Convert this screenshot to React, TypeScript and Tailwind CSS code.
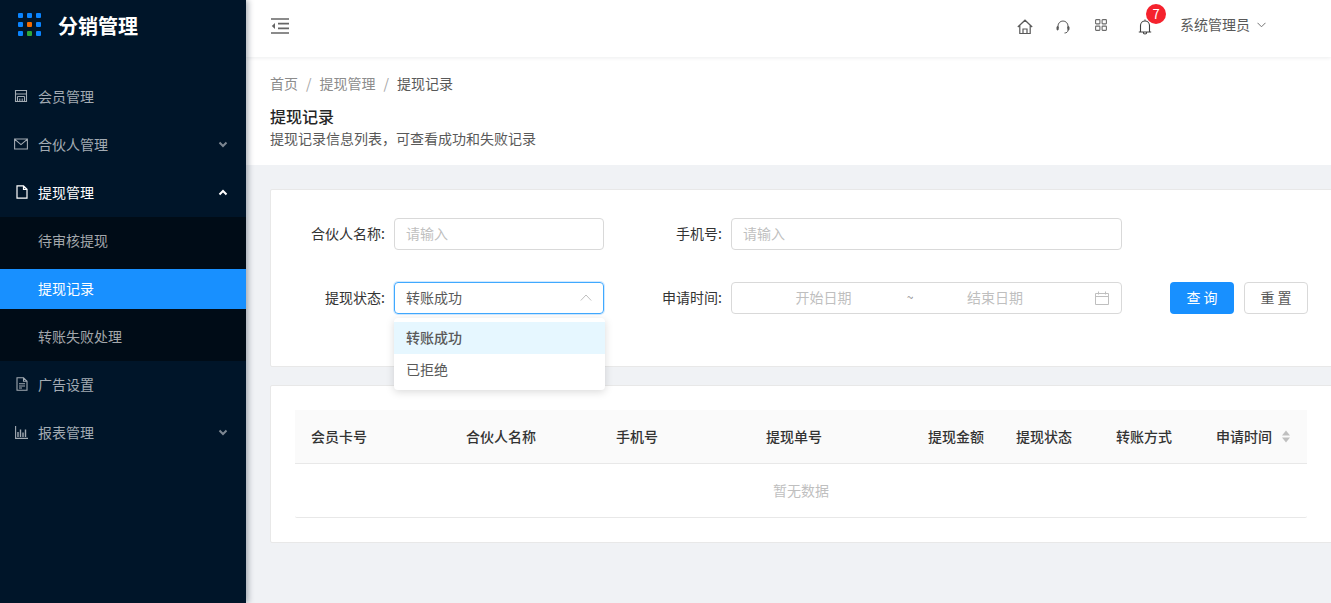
import React from 'react';

const Dots = () => {
  const colors = ['#0a84ff', '#0a84ff', '#0a84ff', '#0a84ff', '#f56a00', '#0a84ff', '#0a84ff', '#2ea83a', '#0a84ff'];
  return (
    <div className="grid grid-cols-[5px_5px_5px] grid-rows-[5px_5px_5px] gap-[4px]">
      {colors.map((c, i) => (
        <span key={i} className="rounded-[1px]" style={{ backgroundColor: c }} />
      ))}
    </div>
  );
};

const Chevron = ({ up = false, className = '' }: { up?: boolean; className?: string }) => (
  <svg width="10" height="7" viewBox="0 0 10 7" fill="none" stroke="currentColor" strokeWidth="2" className={className}>
    <path d={up ? 'M1.5 5.5 5 2l3.5 3.5' : 'M1.5 1.5 5 5l3.5-3.5'} />
  </svg>
);

const StoreIcon = () => (
  <svg width="14" height="14" viewBox="0 0 14 14" fill="none" stroke="currentColor" strokeWidth="1.1">
    <path d="M1.5 1.5h11v11h-11zM1.5 5h11M3.5 7.5h7M3.5 7.5v5M10.5 7.5v5M5.8 9.5v3M8.2 9.5v3" />
  </svg>
);
const MailIcon = () => (
  <svg width="14" height="12" viewBox="0 0 14 12" fill="none" stroke="currentColor" strokeWidth="1.1">
    <path d="M.6 1h12.8v10H.6zM.8 1.3 7 6.6l6.2-5.3" />
  </svg>
);
const PageIcon = () => (
  <svg width="12" height="14" viewBox="0 0 12 14" fill="none" stroke="currentColor" strokeWidth="1.2" className="ml-[2px]">
    <path d="M1 .8h6.500L11 4.300v8.900H1zM7.500.8v3.500H11" />
  </svg>
);
const AdIcon = () => (
  <svg width="12" height="14" viewBox="0 0 12 14" fill="none" stroke="currentColor" strokeWidth="1.1" className="ml-[2px]">
    <path d="M1 .8h6.500L11 4.300v8.900H1zM7.500.8v3.500H11M3 6.800h6M3 9h6M3 11h3" />
  </svg>
);
const ChartIcon = () => (
  <svg width="13" height="13" viewBox="0 0 13 13" fill="none" stroke="currentColor" strokeWidth="1.1" className="ml-[1px]">
    <path d="M.6 0v12.400H13" />
    <path d="M3 11V6M5.500 11V3.500M8 11V6.500M10.500 11V3.500" strokeWidth="1.4" />
  </svg>
);

const MenuItem = ({ icon, label, arrow, active = false }: { icon: React.ReactNode; label: string; arrow?: 'up' | 'down'; active?: boolean }) => (
  <div className={`flex h-12 items-center pb-[2px] pl-[14px] pr-[18px] text-sm ${active ? 'text-white' : 'text-[#a3abb3]'}`}>
    <span className="flex w-[24px] items-center">{icon}</span>
    <span className="flex-1">{label}</span>
    {arrow && <Chevron up={arrow === 'up'} className={active ? 'text-white' : 'text-[#7d8792]'} />}
  </div>
);

const SubItem = ({ label, active = false }: { label: string; active?: boolean }) => (
  <div className="py-1">
    <div className={`flex h-10 items-center pb-[2px] pl-[38px] text-sm ${active ? 'bg-[#1890ff] text-white' : 'text-[#a3a7ab]'}`}>{label}</div>
  </div>
);

const Sidebar = () => (
  <aside className="relative z-20 flex w-[246px] shrink-0 flex-col bg-[#001529] shadow-[2px_0_6px_rgba(0,21,41,0.35)]">
    <div className="flex h-[73px] items-start pl-[18px] pt-[13px]">
      <Dots />
      <span className="ml-[17px] text-[20px] font-bold leading-[26px] text-white">分销管理</span>
    </div>
    <MenuItem icon={<StoreIcon />} label="会员管理" />
    <MenuItem icon={<MailIcon />} label="合伙人管理" arrow="down" />
    <MenuItem icon={<PageIcon />} label="提现管理" arrow="up" active />
    <div className="bg-[#000c17]">
      <SubItem label="待审核提现" />
      <SubItem label="提现记录" active />
      <SubItem label="转账失败处理" />
    </div>
    <MenuItem icon={<AdIcon />} label="广告设置" />
    <MenuItem icon={<ChartIcon />} label="报表管理" arrow="down" />
  </aside>
);

const TopBar = () => (
  <header className="relative z-10 flex h-[57px] shrink-0 items-center bg-white pb-[8px] pl-[25px] pr-[65px] shadow-[0_1px_4px_rgba(0,21,41,0.08)]">
    <svg width="18" height="16" viewBox="0 0 18 16" fill="none" className="mt-[3px] text-[#666]" stroke="currentColor" strokeWidth="1.6">
      <path d="M0 1h18M7 5.600h11M7 10.400h11M0 15h18" />
      <path d="M4 5 0.800 8 4 11z" fill="currentColor" stroke="none" />
    </svg>
    <div className="flex-1" />
    <svg width="16" height="16" viewBox="0 0 16 16" fill="none" stroke="#595959" strokeWidth="1.2" className="mt-[5px]">
      <path d="M.8 8 8 1.200 15.200 8M2.800 6.400V14.500h10.400V6.400M6 14.500v-4.500h4v4.500" />
    </svg>
    <svg width="14" height="15" viewBox="0 0 14 15" fill="none" stroke="#595959" strokeWidth="1" className="ml-[23px] mt-[5px]">
      <path d="M2 8V6a5 5 0 0 1 10 0v2M12 10c0 2-1.500 3-3.500 3" />
      <rect x="1" y="6.500" width="1.200" height="3.500" rx=".6" fill="#595959" />
      <rect x="11.800" y="6.500" width="1.200" height="3.500" rx=".6" fill="#595959" />
    </svg>
    <svg width="12" height="12" viewBox="0 0 12 12" fill="none" stroke="#6b6b6b" strokeWidth="1.1" className="ml-[25px] mt-[1px]">
      <rect x=".6" y=".6" width="4.300" height="4.300" rx=".6" />
      <rect x="7.100" y=".6" width="4.300" height="4.300" rx=".6" />
      <rect x=".6" y="7.100" width="4.300" height="4.300" rx=".6" />
      <rect x="7.100" y="7.100" width="4.300" height="4.300" rx=".6" />
    </svg>
    <div className="relative ml-[31px] mt-[4px]">
      <svg width="14" height="16" viewBox="0 0 14 16" fill="none" stroke="#404040" strokeWidth="1.1" className="block">
        <path d="M7 .5v1.400M2.500 13V6.500a4.500 4.500 0 0 1 9 0V13M.8 13h12.400M5.300 13.200c0 2.400 3.400 2.400 3.400 0" />
      </svg>
      <span className="absolute left-[8px] top-[-15px] flex h-5 w-5 items-center justify-center rounded-full bg-[#f5222d] text-[13px] text-white">7</span>
    </div>
    <span className="ml-[28px] pb-[2px] text-sm text-[#595959]">系统管理员</span>
    <svg width="9" height="6" viewBox="0 0 9 6" fill="none" stroke="#737373" className="ml-[7px]">
      <path d="M.5.8 4.500 4.800 8.500.8" />
    </svg>
  </header>
);

const PageHead = () => (
  <section className="flex h-[108px] shrink-0 flex-col bg-white pl-[24px] pt-[15px]">
    <div className="flex h-[22px] items-center text-sm text-[#8c8c8c]">
      <span>首页</span>
      <span className="mx-2 text-[#a6a6a6]">/</span>
      <span>提现管理</span>
      <span className="mx-2 text-[#a6a6a6]">/</span>
      <span className="text-[#595959]">提现记录</span>
    </div>
    <h1 className="mt-[10px] text-base font-medium leading-[24px] text-[#262626]">提现记录</h1>
    <p className="text-sm leading-[20px] text-[#595959]">提现记录信息列表，可查看成功和失败记录</p>
  </section>
);

const Label = ({ text, width }: { text: string; width: string }) => (
  <label className={`${width} mr-[9px] shrink-0 pb-[2px] text-right text-sm text-[#333]`}>{text}:</label>
);

const FilterCard = () => (
  <div className="relative w-[1100px] shrink-0 rounded-[2px] border border-[#e8e8e8] bg-white pb-[52px] pt-[28px]">
    <div className="flex h-[32px] items-center">
      <Label text="合伙人名称" width="w-[114px]" />
      <div className="flex h-[32px] w-[210px] items-center rounded border border-[#d9d9d9] px-[11px] pb-[2px] text-sm text-[#bfbfbf]">请输入</div>
      <Label text="手机号" width="w-[118px]" />
      <div className="flex h-[32px] w-[391px] items-center rounded border border-[#d9d9d9] px-[11px] pb-[2px] text-sm text-[#bfbfbf]">请输入</div>
    </div>
    <div className="mt-[32px] flex h-[32px] items-center">
      <Label text="提现状态" width="w-[114px]" />
      <div className="relative h-[32px] w-[210px]">
        <div className="flex h-full items-center justify-between rounded border border-[#40a9ff] px-[11px] pb-[2px] text-sm text-[#595959] shadow-[0_0_0_1px_rgba(24,144,255,0.2)]">
          <span>转账成功</span>
          <svg width="12" height="7" viewBox="0 0 12 7" fill="none" stroke="#bfbfbf">
            <path d="M.8 6.500 6 1l5.200 5.500" />
          </svg>
        </div>
        <div className="absolute left-0 top-[36px] z-30 w-[211px] rounded bg-white py-1 shadow-[0_2px_8px_rgba(0,0,0,0.15)]">
          <div className="flex h-8 items-center bg-[#e6f7ff] px-3 pb-[2px] text-sm font-medium text-[#595959]">转账成功</div>
          <div className="flex h-8 items-center px-3 pb-[2px] text-sm text-[#595959]">已拒绝</div>
        </div>
      </div>
      <Label text="申请时间" width="w-[118px]" />
      <div className="flex h-[32px] w-[391px] items-center rounded border border-[#d9d9d9] pb-[2px] pl-[10px] text-sm text-[#bfbfbf]">
        <span className="w-[163px] text-center">开始日期</span>
        <span className="w-[10px] text-center text-xs text-[#8c8c8c]">~</span>
        <span className="w-[160px] text-center">结束日期</span>
        <svg width="14" height="14" viewBox="0 0 14 14" fill="none" stroke="#bfbfbf" className="ml-[20px] mt-[2px]">
          <path d="M.5 2.500h13v11H.5zM.5 5.500h13M3.500.5v3M10.500.5v3" />
        </svg>
      </div>
      <button className="ml-[48px] h-[32px] w-[64px] rounded bg-[#1890ff] pb-[2px] text-sm text-white">查 询</button>
      <button className="ml-[10px] h-[32px] w-[64px] rounded border border-[#d9d9d9] bg-white pb-[2px] text-sm text-[#595959]">重 置</button>
    </div>
  </div>
);

const SortIcon = () => (
  <svg width="8" height="13" viewBox="0 0 8 13" className="ml-[10px] mt-[2px]">
    <path d="M4 .5 8 5.500H0z" fill="#bfbfbf" />
    <path d="M4 12.500 0 7.500h8z" fill="#bfbfbf" />
  </svg>
);

const cols = ['会员卡号', '合伙人名称', '手机号', '提现单号', '提现金额', '提现状态', '转账方式'];

const TableCard = () => (
  <div className="mt-[18px] w-[1100px] shrink-0 rounded-[2px] border border-[#e8e8e8] bg-white px-[24px] pb-[24px] pt-[24px]">
    <div className="w-[1012px]">
      <div className="grid h-[54px] grid-cols-[155px_150px_150px_162px_88px_100px_100px_107px] items-center border-b border-[#e8e8e8] bg-[#fafafa] pb-[2px] text-sm font-medium text-[#333]">
        {cols.map((c) => (
          <span key={c} className="pl-4">{c}</span>
        ))}
        <span className="flex items-center pl-4">
          申请时间
          <SortIcon />
        </span>
      </div>
      <div className="flex h-[54px] items-center justify-center rounded-b-[2px] border-b border-[#e8e8e8] pb-[2px] text-sm text-[#bfbfbf]">暂无数据</div>
    </div>
  </div>
);

export default function App() {
  return (
    <div className="flex h-[603px] w-[1331px] overflow-hidden bg-[#f0f2f5] font-['Noto_Sans_CJK_SC','Liberation_Sans',sans-serif]">
      <Sidebar />
      <div className="flex min-w-0 flex-1 flex-col">
        <TopBar />
        <PageHead />
        <main className="flex flex-1 flex-col pl-[24px] pt-[24px]">
          <FilterCard />
          <TableCard />
        </main>
      </div>
    </div>
  );
}
